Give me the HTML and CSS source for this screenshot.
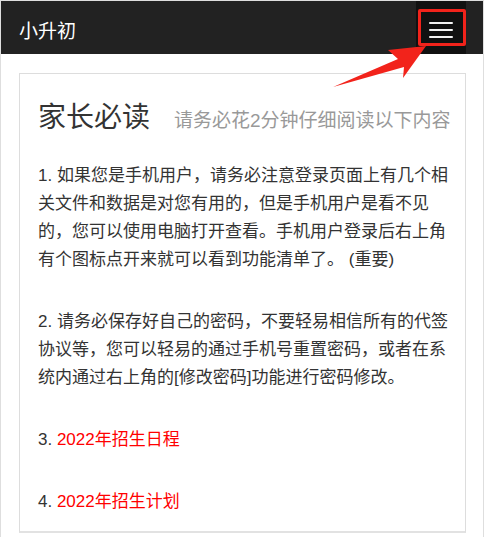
FILE: index.html
```html
<!DOCTYPE html>
<html lang="zh-CN">
<head>
<meta charset="utf-8">
<title>小升初</title>
<link rel="stylesheet" href="styles.css">
</head>
<body>
<div class="frame">
  <nav class="navbar">
    <span class="brand">小升初</span>
    <div class="toggle">
      <span class="bar"></span>
      <span class="bar"></span>
      <span class="bar"></span>
    </div>
  </nav>
  <section class="card">
    <header class="card-head">
      <h1 class="title">家长必读</h1>
      <span class="subtitle">请务必花2分钟仔细阅读以下内容</span>
    </header>
    <p class="item">1. 如果您是手机用户，请务必注意登录页面上有几个相关文件和数据是对您有用的，但是手机用户是看不见的，您可以使用电脑打开查看。手机用户登录后右上角有个图标点开来就可以看到功能清单了。 (重要)</p>
    <p class="item">2. 请务必保存好自己的密码，不要轻易相信所有的代签协议等，您可以轻易的通过手机号重置密码，或者在系统内通过右上角的[修改密码]功能进行密码修改。</p>
    <p class="item">3. <a class="link" href="#">2022年招生日程</a></p>
    <p class="item last">4. <a class="link" href="#">2022年招生计划</a></p>
  </section>
</div>
<div class="mark-box"></div>
<svg class="mark-arrow" width="484" height="537" viewBox="0 0 484 537">
  <polygon points="426,46 388,50 398,59 333,87 404,67 403,78" fill="#f2231b"/>
</svg>
</body>
</html>
```

FILE: styles.css
```css
html, body {
  margin: 0;
  padding: 0;
  background: #fff;
}
body {
  font-family: "Liberation Sans", "Noto Sans CJK SC", sans-serif;
  color: #333;
  position: relative;
  width: 484px;
  height: 537px;
  overflow: hidden;
}
.frame {
  box-sizing: border-box;
  height: 537px;
  border: 1px solid #dedede;
  border-bottom: none;
}
.navbar {
  height: 53px;
  background: #222;
  display: flex;
  justify-content: space-between;
  align-items: stretch;
  padding-left: 18px;
  padding-right: 17px;
}
.brand {
  color: #fff;
  font-size: 19px;
  line-height: 57px;
  font-family: "Noto Sans CJK SC", sans-serif;
}
.toggle {
  width: 50px;
  background: #111;
  display: flex;
  flex-direction: column;
  align-items: center;
  padding-top: 21px;
  box-sizing: border-box;
  gap: 5px;
}
.bar {
  display: block;
  width: 24px;
  height: 2px;
  background: #f4f4f4;
  border-radius: 1px;
}
.card {
  margin: 19px 17px 0 18px;
  border: 1px solid #ddd;
  border-bottom: 2px solid #e2e2e2;
  padding: 21px 12px 15px 18px;
}
.card-head {
  display: flex;
  align-items: baseline;
  flex-wrap: nowrap;
  white-space: nowrap;
  margin-bottom: 27px;
}
.title {
  flex: none;
  margin: 0;
  font-size: 28px;
  line-height: 40px;
  font-weight: normal;
  color: #333;
  font-family: "Noto Sans CJK SC", sans-serif;
}
.subtitle {
  flex: none;
  margin-left: 24px;
  font-size: 19px;
  color: #999;
  font-family: "Liberation Sans", "Noto Sans CJK SC", sans-serif;
}
.item {
  margin: 0 0 34px;
  font-size: 17px;
  line-height: 28px;
}
.item.last {
  margin-bottom: 0;
}
.link {
  color: #ff0000;
  text-decoration: none;
}
.mark-box {
  position: absolute;
  left: 418px;
  top: 9px;
  width: 48px;
  height: 37px;
  box-sizing: border-box;
  border: 3px solid #f2231b;
  border-radius: 2px;
}
.mark-arrow {
  position: absolute;
  left: 0;
  top: 0;
  pointer-events: none;
}
```
